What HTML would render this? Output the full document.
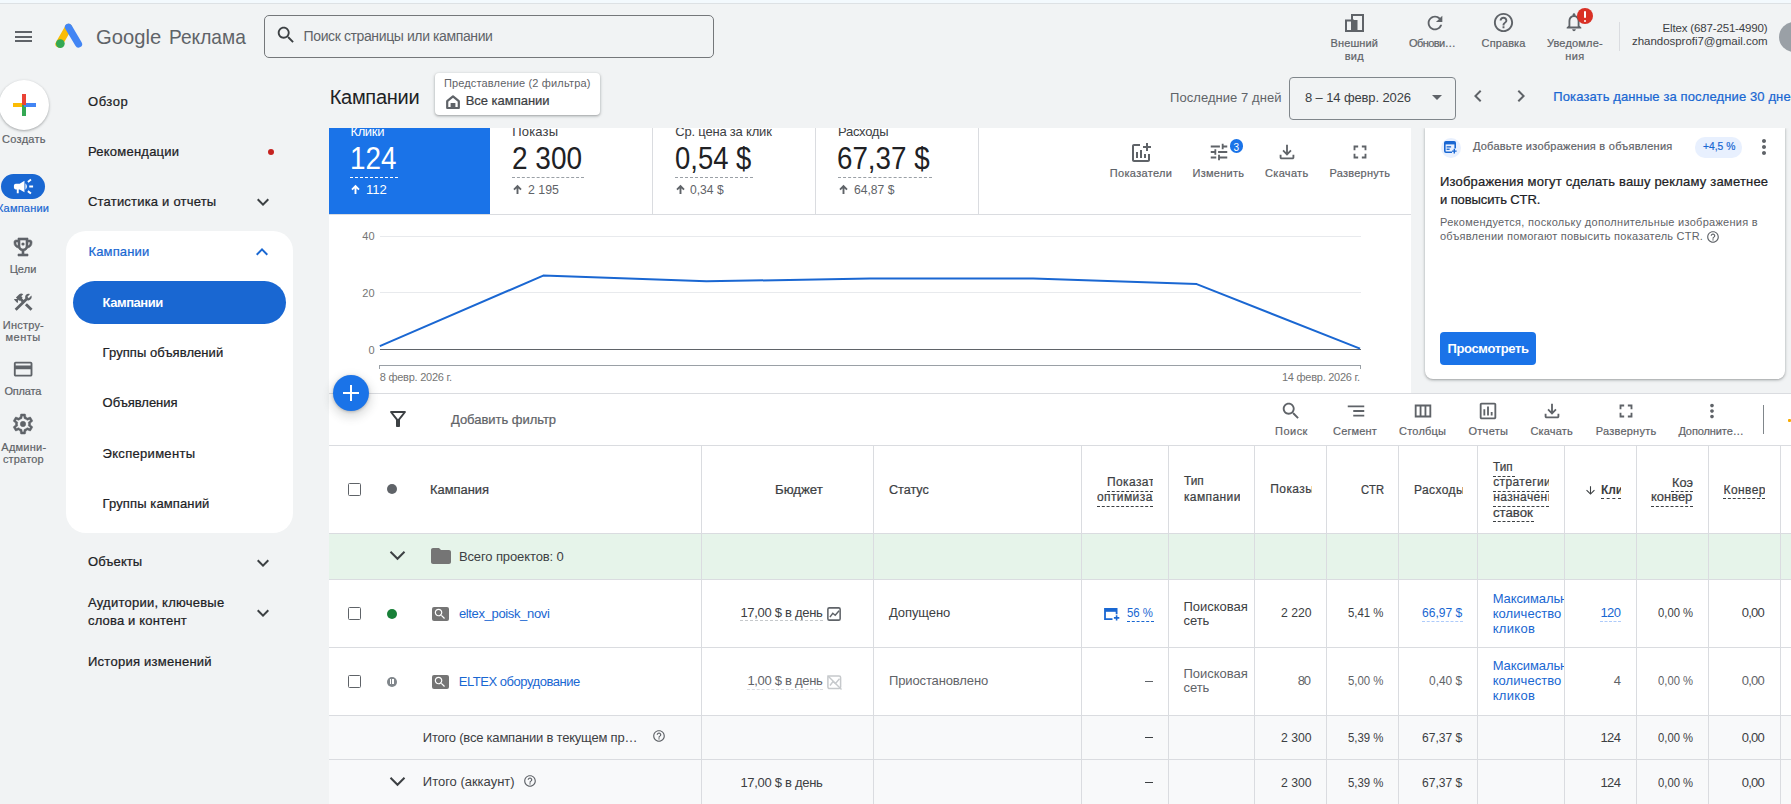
<!DOCTYPE html>
<html><head><meta charset="utf-8"><style>
html,body{margin:0;padding:0;}
body{width:1791px;height:804px;overflow:hidden;position:relative;background:#f1f3f4;font-family:"Liberation Sans",sans-serif;}
.a{position:absolute;}
.t{position:absolute;white-space:nowrap;line-height:1;}
svg{position:absolute;overflow:visible;}
</style></head><body>
<div class="a" style="left:0;top:0;width:1791px;height:3px;background:#f3f9fd"></div>
<div class="a" style="left:0;top:3px;width:1791px;height:1px;background:#dde1e4"></div>
<div class="a" style="left:15px;top:31px;width:17px;height:2px;background:#5f6368"></div>
<div class="a" style="left:15px;top:35.5px;width:17px;height:2px;background:#5f6368"></div>
<div class="a" style="left:15px;top:40px;width:17px;height:2px;background:#5f6368"></div>
<svg style="left:54px;top:22.2px;" width="30" height="27" viewBox="0 0 30 27"><path d="M5 22 L14.5 5.5" stroke="#fbbc04" stroke-width="7.2" stroke-linecap="round" fill="none"/><path d="M14.5 5.2 L24.5 22" stroke="#4285f4" stroke-width="7.2" stroke-linecap="round" fill="none"/><circle cx="6.3" cy="21.6" r="4.4" fill="#34a853"/></svg>
<div class="t" style="left:95.50px;top:25.72px;font-size:21px;color:#5f6368;transform:scaleX(0.9616);transform-origin:0 0;"><span id="t0">Google</span></div>
<div class="t" style="left:169.00px;top:25.72px;font-size:21px;color:#5f6368;transform:scaleX(0.9116);transform-origin:0 0;"><span id="t1">Реклама</span></div>
<div class="a" style="left:264px;top:15px;width:448px;height:41px;border:1px solid #74777a;border-radius:5px;"></div>
<svg style="left:275px;top:24px;" width="22" height="22" viewBox="0 0 24 24"><path fill="#3c4043" d="M15.5 14h-.79l-.28-.27C15.41 12.59 16 11.11 16 9.5 16 5.91 13.09 3 9.5 3S3 5.91 3 9.5 5.91 16 9.5 16c1.61 0 3.09-.59 4.23-1.57l.27.28v.79l5 4.99L20.49 19l-4.99-5zm-6 0C7.01 14 5 11.99 5 9.5S7.01 5 9.5 5 14 7.01 14 9.5 11.99 14 9.5 14z"/></svg>
<div class="t" style="left:303.60px;top:29.45px;font-size:14px;color:#5f6368;letter-spacing:-0.390px;"><span id="t2">Поиск страницы или кампании</span></div>
<svg style="left:1345px;top:14px;" width="19" height="18" viewBox="0 0 19 18"><rect x="7" y="1" width="11" height="16" fill="none" stroke="#5f6368" stroke-width="2"/><rect x="1" y="6.5" width="7" height="10.5" fill="none" stroke="#5f6368" stroke-width="2"/><rect x="6.5" y="6" width="6" height="12" fill="#5f6368"/></svg>
<div class="t" style="left:1330.55px;top:38.09px;font-size:11px;color:#5f6368;letter-spacing:0.100px;-webkit-text-stroke:0.20px #5f6368;"><span id="t3">Внешний</span></div>
<div class="t" style="left:1344.70px;top:50.99px;font-size:11px;color:#5f6368;letter-spacing:0.300px;-webkit-text-stroke:0.20px #5f6368;"><span id="t4">вид</span></div>
<svg style="left:1423.5px;top:12px;" width="22" height="22" viewBox="0 0 24 24"><path fill="#5f6368" d="M17.65 6.35C16.2 4.9 14.21 4 12 4c-4.42 0-7.99 3.58-7.99 8s3.57 8 7.99 8c3.73 0 6.84-2.55 7.73-6h-2.08c-.82 2.33-3.04 4-5.65 4-3.31 0-6-2.69-6-6s2.69-6 6-6c1.66 0 3.14.69 4.22 1.78L13 11h7V4l-2.35 2.35z"/></svg>
<div class="t" style="left:1409.00px;top:38.09px;font-size:11px;color:#5f6368;letter-spacing:-0.558px;-webkit-text-stroke:0.20px #5f6368;"><span id="t5">Обнови…</span></div>
<svg style="left:1491.95px;top:11.4px;" width="23" height="23" viewBox="0 0 24 24"><path fill="#5f6368" d="M11 18h2v-2h-2v2zm1-16C6.48 2 2 6.48 2 12s4.48 10 10 10 10-4.48 10-10S17.52 2 12 2zm0 18c-4.41 0-8-3.59-8-8s3.59-8 8-8 8 3.59 8 8-3.59 8-8 8zm0-14c-2.21 0-4 1.79-4 4h2c0-1.1.9-2 2-2s2 .9 2 2c0 2-3 1.75-3 5h2c0-2.25 3-2.5 3-5 0-2.21-1.79-4-4-4z"/></svg>
<div class="t" style="left:1481.60px;top:37.89px;font-size:11px;color:#5f6368;letter-spacing:0.100px;-webkit-text-stroke:0.20px #5f6368;"><span id="t6">Справка</span></div>
<svg style="left:1563.35px;top:11.2px;" width="22" height="22" viewBox="0 0 24 24"><path fill="#5f6368" d="M12 22c1.1 0 2-.9 2-2h-4c0 1.1.9 2 2 2zm6-6v-5c0-3.07-1.64-5.64-4.5-6.32V4c0-.83-.67-1.5-1.5-1.5s-1.5.67-1.5 1.5v.68C7.63 5.36 6 7.92 6 11v5l-2 2v1h16v-1l-2-2zm-2 1H8v-6c0-2.48 1.51-4.5 4-4.5s4 2.02 4 4.5v6z"/></svg>
<div class="a" style="left:1576.5px;top:8.2px;width:16px;height:16px;border-radius:50%;background:#d93025"></div>
<div class="a" style="left:1583.6px;top:11px;width:2px;height:7px;background:#fff;border-radius:1px"></div>
<div class="a" style="left:1583.6px;top:19.5px;width:2px;height:2px;background:#fff;border-radius:1px"></div>
<div class="t" style="left:1546.90px;top:37.89px;font-size:11px;color:#5f6368;letter-spacing:0.194px;-webkit-text-stroke:0.20px #5f6368;"><span id="t7">Уведомле-</span></div>
<div class="t" style="left:1565.30px;top:50.79px;font-size:11px;color:#5f6368;letter-spacing:0.400px;-webkit-text-stroke:0.20px #5f6368;"><span id="t8">ния</span></div>
<div class="a" style="left:1619px;top:22px;width:1px;height:29px;background:#dadce0"></div>
<div class="t" style="left:1662.50px;top:22.57px;font-size:11.5px;color:#3c4043;letter-spacing:-0.155px;"><span id="t9">Eltex (687-251-4990)</span></div>
<div class="t" style="left:1632.00px;top:36.47px;font-size:11.5px;color:#3c4043;letter-spacing:-0.034px;"><span id="t10">zhandosprofi7@gmail.com</span></div>
<div class="a" style="left:1779px;top:22px;width:30px;height:30px;border-radius:50%;background:#9aa0a6"></div>
<div class="a" style="left:-1px;top:80px;width:50px;height:50px;border-radius:50%;background:#fff;box-shadow:0 1px 3px rgba(60,64,67,.3),0 1px 2px rgba(60,64,67,.15)"></div>
<div class="a" style="left:13px;top:102.5px;width:11px;height:4px;background:#fbbc04"></div>
<div class="a" style="left:22px;top:105px;width:4px;height:10.5px;background:#34a853"></div>
<div class="a" style="left:24px;top:102.5px;width:11.5px;height:4px;background:#4285f4"></div>
<div class="a" style="left:22px;top:93.5px;width:4px;height:11.5px;background:#ea4335"></div>
<div class="t" style="left:2.10px;top:133.99px;font-size:11px;color:#5f6368;letter-spacing:0.267px;-webkit-text-stroke:0.20px #5f6368;"><span id="t11">Создать</span></div>
<div class="a" style="left:1px;top:174px;width:44px;height:25px;border-radius:13px;background:#1967d2"></div>
<svg style="left:12.1px;top:174.6px;" width="23" height="23" viewBox="0 0 24 24"><path fill="#fff" d="M18 11v2h4v-2h-4zm-2 6.61c.96.71 2.21 1.65 3.2 2.39.4-.53.8-1.07 1.2-1.6-.99-.74-2.24-1.68-3.2-2.4-.4.54-.8 1.08-1.2 1.61zM20.4 5.6c-.4-.53-.8-1.07-1.2-1.6-.99.74-2.24 1.68-3.2 2.4.4.53.8 1.07 1.2 1.6.96-.72 2.21-1.65 3.2-2.4zM4 9c-1.1 0-2 .9-2 2v2c0 1.1.9 2 2 2h1v4h2v-4h1l5 3V6L8 9H4zm11.5 3c0-1.33-.58-2.53-1.5-3.35v6.69c.92-.81 1.5-2.01 1.5-3.34z"/></svg>
<div class="t" style="left:-3.00px;top:202.69px;font-size:11px;color:#1967d2;letter-spacing:0.207px;-webkit-text-stroke:0.20px #1967d2;"><span id="t12">Кампании</span></div>
<svg style="left:11.3px;top:234.9px;" width="24" height="24" viewBox="0 0 24 24"><path fill="#5f6368" stroke="#5f6368" stroke-width="0.6" d="M19 5h-2V3H7v2H5c-1.1 0-2 .9-2 2v1c0 2.55 1.92 4.63 4.39 4.94.63 1.5 1.98 2.63 3.61 2.96V19H7v2h10v-2h-4v-3.1c1.63-.33 2.98-1.46 3.61-2.96C19.08 12.63 21 10.55 21 8V7c0-1.1-.9-2-2-2zM5 8V7h2v3.82C5.84 10.4 5 9.3 5 8zm7 6c-1.65 0-3-1.35-3-3V5h6v6c0 1.65-1.35 3-3 3zm7-6c0 1.3-.84 2.4-2 2.82V7h2v1z"/><circle cx="12" cy="9" r="1.6" fill="#5f6368"/></svg>
<div class="t" style="left:9.65px;top:264.39px;font-size:11px;color:#5f6368;letter-spacing:0.083px;-webkit-text-stroke:0.20px #5f6368;"><span id="t13">Цели</span></div>
<svg style="left:12.05px;top:291.15px;" width="22.5" height="22.5" viewBox="0 0 24 24"><path fill="#5f6368" d="M13.783 15.172l2.121-2.121 5.996 5.996-2.121 2.121zM17.5 10c1.93 0 3.5-1.57 3.5-3.5 0-.58-.16-1.12-.41-1.6l-2.7 2.7-1.49-1.49 2.7-2.7c-.48-.25-1.02-.41-1.6-.41C15.57 3 14 4.57 14 6.5c0 .41.08.8.21 1.16l-1.85 1.85-1.78-1.78.71-.71-1.41-1.41L12 3.49c-1.17-1.17-3.07-1.17-4.24 0L4.22 7.03l1.41 1.41H2.81l-.71.71 3.54 3.54.71-.71V9.15l1.41 1.41.71-.71 1.78 1.78-7.41 7.41 2.12 2.12L16.34 9.79c.36.13.75.21 1.16.21z"/></svg>
<div class="t" style="left:2.80px;top:319.79px;font-size:11px;color:#5f6368;letter-spacing:0.217px;-webkit-text-stroke:0.20px #5f6368;"><span id="t14">Инстру-</span></div>
<div class="t" style="left:5.55px;top:332.29px;font-size:11px;color:#5f6368;letter-spacing:0.450px;-webkit-text-stroke:0.20px #5f6368;"><span id="t15">менты</span></div>
<svg style="left:11.95px;top:357.85px;" width="22.3" height="22.3" viewBox="0 0 24 24"><path fill="#5f6368" d="M20 4H4c-1.11 0-1.99.89-1.99 2L2 18c0 1.11.89 2 2 2h16c1.11 0 2-.89 2-2V6c0-1.11-.89-2-2-2zm0 14H4v-6h16v6zm0-10H4V6h16v2z"/></svg>
<div class="t" style="left:4.50px;top:385.79px;font-size:11px;color:#5f6368;letter-spacing:-0.210px;-webkit-text-stroke:0.20px #5f6368;"><span id="t16">Оплата</span></div>
<svg style="left:11.1px;top:411.85px;" width="24" height="24" viewBox="0 0 24 24"><path fill="#5f6368" stroke="#5f6368" stroke-width="0.5" d="M19.43 12.98c.04-.32.07-.64.07-.98 0-.34-.03-.66-.07-.98l2.11-1.65c.19-.15.24-.42.12-.64l-2-3.46c-.09-.16-.26-.25-.44-.25-.06 0-.12.01-.17.03l-2.49 1c-.52-.4-1.08-.73-1.69-.98l-.38-2.65C14.46 2.18 14.25 2 14 2h-4c-.25 0-.46.18-.49.42l-.38 2.65c-.61.25-1.17.59-1.69.98l-2.49-1c-.06-.02-.12-.03-.18-.03-.17 0-.34.09-.43.25l-2 3.46c-.13.22-.07.49.12.64l2.11 1.65c-.04.32-.07.65-.07.98 0 .33.03.66.07.98l-2.11 1.65c-.19.15-.24.42-.12.64l2 3.46c.09.16.26.25.44.25.06 0 .12-.01.17-.03l2.49-1c.52.4 1.08.73 1.69.98l.38 2.65c.03.24.24.42.49.42h4c.25 0 .46-.18.49-.42l.38-2.65c.61-.25 1.17-.59 1.69-.98l2.49 1c.06.02.12.03.18.03.17 0 .34-.09.43-.25l2-3.46c.12-.22.07-.49-.12-.64l-2.11-1.65zm-1.98-1.71c.04.31.05.52.05.73 0 .21-.02.43-.05.73l-.14 1.13.89.7 1.08.84-.7 1.21-1.27-.51-1.04-.42-.9.68c-.43.32-.84.56-1.25.73l-1.06.43-.16 1.13-.2 1.35h-1.4l-.19-1.35-.16-1.13-1.06-.43c-.43-.18-.83-.41-1.23-.71l-.91-.7-1.06.43-1.27.51-.7-1.21 1.08-.84.89-.7-.14-1.13c-.03-.31-.05-.54-.05-.74s.02-.43.05-.73l.14-1.13-.89-.7-1.08-.84.7-1.21 1.27.51 1.04.42.9-.68c.43-.32.84-.56 1.25-.73l1.06-.43.16-1.13.2-1.35h1.39l.19 1.35.16 1.13 1.06.43c.43.18.83.41 1.23.71l.91.7 1.06-.43 1.27-.51.7 1.21-1.07.85-.89.7.14 1.13zM12 9.3a2.7 2.7 0 1 0 0 5.4a2.7 2.7 0 1 0 0-5.4z"/></svg>
<div class="t" style="left:1.30px;top:441.59px;font-size:11px;color:#5f6368;letter-spacing:0.242px;-webkit-text-stroke:0.20px #5f6368;"><span id="t17">Админи-</span></div>
<div class="t" style="left:2.90px;top:453.79px;font-size:11px;color:#5f6368;letter-spacing:0.183px;-webkit-text-stroke:0.20px #5f6368;"><span id="t18">стратор</span></div>
<div class="t" style="left:88.00px;top:94.50px;font-size:13px;color:#202124;letter-spacing:0.538px;-webkit-text-stroke:0.23px #202124;"><span id="t19">Обзор</span></div>
<div class="t" style="left:88.00px;top:145.20px;font-size:13px;color:#202124;letter-spacing:0.227px;-webkit-text-stroke:0.23px #202124;"><span id="t20">Рекомендации</span></div>
<div class="a" style="left:268.3px;top:148.6px;width:6px;height:6px;border-radius:50%;background:#c5221f"></div>
<div class="t" style="left:88.00px;top:195.00px;font-size:13px;color:#202124;letter-spacing:0.203px;-webkit-text-stroke:0.23px #202124;"><span id="t21">Статистика и отчеты</span></div>
<svg style="left:251px;top:190px;" width="24" height="24" viewBox="0 0 24 24"><path fill="#3c4043" d="M16.59 8.59L12 13.17 7.41 8.59 6 10l6 6 6-6z"/></svg>
<div class="a" style="left:66px;top:231px;width:227px;height:302px;border-radius:20px;background:#fff"></div>
<div class="t" style="left:88.40px;top:245.00px;font-size:13px;color:#1967d2;letter-spacing:0.171px;-webkit-text-stroke:0.23px #1967d2;"><span id="t22">Кампании</span></div>
<svg style="left:250px;top:240px;" width="24" height="24" viewBox="0 0 24 24"><path fill="#1967d2" d="M12 8l-6 6 1.41 1.41L12 10.83l4.59 4.58L18 14z"/></svg>
<div class="a" style="left:73px;top:281px;width:213px;height:42.5px;border-radius:22px;background:#1967d2"></div>
<div class="t" style="left:102.50px;top:295.80px;font-size:13px;color:#fff;letter-spacing:-0.436px;font-weight:700;"><span id="t23">Кампании</span></div>
<div class="t" style="left:102.60px;top:345.90px;font-size:13px;color:#202124;letter-spacing:0.072px;-webkit-text-stroke:0.23px #202124;"><span id="t24">Группы объявлений</span></div>
<div class="t" style="left:102.60px;top:396.30px;font-size:13px;color:#202124;letter-spacing:-0.033px;-webkit-text-stroke:0.23px #202124;"><span id="t25">Объявления</span></div>
<div class="t" style="left:102.60px;top:447.00px;font-size:13px;color:#202124;letter-spacing:0.300px;-webkit-text-stroke:0.23px #202124;"><span id="t26">Эксперименты</span></div>
<div class="t" style="left:102.60px;top:497.30px;font-size:13px;color:#202124;letter-spacing:0.118px;-webkit-text-stroke:0.23px #202124;"><span id="t27">Группы кампаний</span></div>
<div class="t" style="left:88.00px;top:555.10px;font-size:13px;color:#202124;letter-spacing:0.100px;-webkit-text-stroke:0.23px #202124;"><span id="t28">Объекты</span></div>
<svg style="left:251px;top:550.5px;" width="24" height="24" viewBox="0 0 24 24"><path fill="#3c4043" d="M16.59 8.59L12 13.17 7.41 8.59 6 10l6 6 6-6z"/></svg>
<div class="t" style="left:88.00px;top:596.00px;font-size:13px;color:#202124;letter-spacing:0.239px;-webkit-text-stroke:0.23px #202124;"><span id="t29">Аудитории, ключевые</span></div>
<div class="t" style="left:88.00px;top:614.00px;font-size:13px;color:#202124;letter-spacing:0.168px;-webkit-text-stroke:0.23px #202124;"><span id="t30">слова и контент</span></div>
<svg style="left:251px;top:600.5px;" width="24" height="24" viewBox="0 0 24 24"><path fill="#3c4043" d="M16.59 8.59L12 13.17 7.41 8.59 6 10l6 6 6-6z"/></svg>
<div class="t" style="left:88.00px;top:654.80px;font-size:13px;color:#202124;letter-spacing:0.256px;-webkit-text-stroke:0.23px #202124;"><span id="t31">История изменений</span></div>
<div class="t" style="left:329.70px;top:87.27px;font-size:20px;color:#202124;letter-spacing:-0.279px;"><span id="t32">Кампании</span></div>
<div class="a" style="left:435px;top:73px;width:165px;height:42px;border-radius:4px;background:#fff;box-shadow:0 1px 2px rgba(60,64,67,.3),0 1px 3px 1px rgba(60,64,67,.15)"></div>
<div class="t" style="left:443.90px;top:78.19px;font-size:11px;color:#5f6368;letter-spacing:0.160px;"><span id="t33">Представление (2 фильтра)</span></div>
<svg style="left:446px;top:94.5px;" width="14" height="14" viewBox="0 0 14 14"><path d="M1.2 13V6.2L7 1.4l5.8 4.8V13z" fill="none" stroke="#5f6368" stroke-width="2.2" stroke-linejoin="round"/><rect x="4.6" y="8" width="4.8" height="5" fill="#5f6368"/></svg>
<div class="t" style="left:465.70px;top:93.70px;font-size:13px;color:#3c4043;letter-spacing:-0.023px;-webkit-text-stroke:0.23px #3c4043;"><span id="t34">Все кампании</span></div>
<div class="t" style="left:1170.00px;top:90.80px;font-size:13px;color:#5f6368;letter-spacing:0.057px;"><span id="t35">Последние 7 дней</span></div>
<div class="a" style="left:1289px;top:77px;width:165px;height:41px;border:1px solid #80868b;border-radius:4px;"></div>
<div class="t" style="left:1305.00px;top:90.80px;font-size:13px;color:#3c4043;letter-spacing:-0.122px;"><span id="t36">8 – 14 февр. 2026</span></div>
<svg style="left:1425px;top:85px;" width="24" height="24" viewBox="0 0 24 24"><path fill="#5f6368" d="M7 10l5 5 5-5z"/></svg>
<svg style="left:1465.5px;top:84px;" width="24" height="24" viewBox="0 0 24 24"><path fill="#5f6368" d="M15.41 7.41L14 6l-6 6 6 6 1.41-1.41L10.83 12z"/></svg>
<svg style="left:1508.5px;top:84px;" width="24" height="24" viewBox="0 0 24 24"><path fill="#5f6368" d="M10 6L8.59 7.41 13.17 12l-4.58 4.59L10 18l6-6z"/></svg>
<div class="t" style="left:1553.30px;top:90.00px;font-size:13px;color:#1967d2;letter-spacing:0.120px;-webkit-text-stroke:0.23px #1967d2;"><span id="t37">Показать данные за последние 30 дней</span></div>
<div class="a" style="left:329px;top:127.5px;width:1082px;height:266px;background:#fff"></div>
<div class="a" style="left:329px;top:213.5px;width:1082px;height:1px;background:#dadce0"></div>
<div class="a" style="left:329px;top:127.5px;width:161px;height:86.5px;background:#1a73e8"></div>
<div class="a" style="left:652px;top:127.5px;width:1px;height:86px;background:#dadce0"></div>
<div class="a" style="left:815px;top:127.5px;width:1px;height:86px;background:#dadce0"></div>
<div class="a" style="left:978px;top:127.5px;width:1px;height:86px;background:#dadce0"></div>
<div class="t" style="left:350.40px;top:124.80px;font-size:13px;color:#fff;letter-spacing:-0.338px;"><span id="t38">Клики</span></div>
<div class="t" style="left:349.80px;top:142.86px;font-size:31px;color:#fff;transform:scaleX(0.8975);transform-origin:0 0;"><span id="t39">124</span></div>
<div class="a" style="left:350.4px;top:177px;width:47.9px;height:0;border-top:1px dashed #fff"></div>
<svg style="left:351.4px;top:185px;" width="9" height="9" viewBox="0 0 9 9"><path d="M4.5 9V1.2M1 4.6L4.5 1.1 8 4.6" fill="none" stroke="#fff" stroke-width="1.9"/></svg>
<div class="t" style="left:365.60px;top:183.64px;font-size:12px;color:#fff;transform:scaleX(1.0914);transform-origin:0 0;"><span id="t40">112</span></div>
<div class="t" style="left:512.30px;top:124.80px;font-size:13px;color:#3c4043;letter-spacing:0.150px;"><span id="t41">Показы</span></div>
<div class="t" style="left:511.70px;top:142.86px;font-size:31px;color:#202124;transform:scaleX(0.9034);transform-origin:0 0;"><span id="t42">2 300</span></div>
<div class="a" style="left:512.3px;top:177px;width:71.6px;height:0;border-top:1px dashed #9aa0a6"></div>
<svg style="left:513.3px;top:185px;" width="9" height="9" viewBox="0 0 9 9"><path d="M4.5 9V1.2M1 4.6L4.5 1.1 8 4.6" fill="none" stroke="#5f6368" stroke-width="1.9"/></svg>
<div class="t" style="left:527.50px;top:183.64px;font-size:12px;color:#5f6368;transform:scaleX(1.0283);transform-origin:0 0;"><span id="t43">2 195</span></div>
<div class="t" style="left:675.30px;top:124.80px;font-size:13px;color:#3c4043;letter-spacing:-0.203px;"><span id="t44">Ср. цена за клик</span></div>
<div class="t" style="left:674.70px;top:142.86px;font-size:31px;color:#202124;transform:scaleX(0.8852);transform-origin:0 0;"><span id="t45">0,54 $</span></div>
<div class="a" style="left:675.3px;top:177px;width:77.8px;height:0;border-top:1px dashed #9aa0a6"></div>
<svg style="left:676.3px;top:185px;" width="9" height="9" viewBox="0 0 9 9"><path d="M4.5 9V1.2M1 4.6L4.5 1.1 8 4.6" fill="none" stroke="#5f6368" stroke-width="1.9"/></svg>
<div class="t" style="left:690.40px;top:183.64px;font-size:12px;color:#5f6368;transform:scaleX(1.0075);transform-origin:0 0;"><span id="t46">0,34 $</span></div>
<div class="t" style="left:838.00px;top:124.80px;font-size:13px;color:#3c4043;letter-spacing:-0.283px;"><span id="t47">Расходы</span></div>
<div class="t" style="left:837.40px;top:142.86px;font-size:31px;color:#202124;transform:scaleX(0.8951);transform-origin:0 0;"><span id="t48">67,37 $</span></div>
<div class="a" style="left:838px;top:177px;width:94.1px;height:0;border-top:1px dashed #9aa0a6"></div>
<svg style="left:839px;top:185px;" width="9" height="9" viewBox="0 0 9 9"><path d="M4.5 9V1.2M1 4.6L4.5 1.1 8 4.6" fill="none" stroke="#5f6368" stroke-width="1.9"/></svg>
<div class="t" style="left:853.50px;top:183.64px;font-size:12px;color:#5f6368;transform:scaleX(1.0112);transform-origin:0 0;"><span id="t49">64,87 $</span></div>
<div class="a" style="left:329px;top:120px;width:1082px;height:7.5px;background:#f1f3f4"></div>
<svg style="left:1129px;top:141px;" width="24" height="24" viewBox="0 0 24 24"><path fill="#5f6368" d="M22 5v2h-3v3h-2V7h-3V5h3V2h2v3h3zm-3 14H5V5h6V3H5c-1.1 0-2 .9-2 2v14c0 1.1.9 2 2 2h14c1.1 0 2-.9 2-2v-6h-2v6zm-4-6v4h2v-4h-2zm-4 4h2V9h-2v8zm-2 0v-6H7v6h2z"/></svg>
<div class="t" style="left:1109.80px;top:167.79px;font-size:11px;color:#5f6368;letter-spacing:0.333px;-webkit-text-stroke:0.20px #5f6368;"><span id="t50">Показатели</span></div>
<svg style="left:1207.65px;top:141.1px;" width="22" height="22" viewBox="0 0 24 24"><path fill="#5f6368" d="M3 17v2h6v-2H3zM3 5v2h10V5H3zm10 16v-2h8v-2h-8v-2h-2v6h2zM7 9v2H3v2h4v2h2V9H7zm14 4v-2H11v2h10zm-6-4h2V7h4V5h-4V3h-2v6z"/></svg>
<div class="a" style="left:1229.6px;top:139.4px;width:13.4px;height:13.4px;border-radius:50%;background:#1a73e8"></div>
<div class="t" style="left:1233.52px;top:142.53px;font-size:10px;color:#fff;"><span id="t51">3</span></div>
<div class="t" style="left:1192.50px;top:167.79px;font-size:11px;color:#5f6368;letter-spacing:0.257px;-webkit-text-stroke:0.20px #5f6368;"><span id="t52">Изменить</span></div>
<svg style="left:1275.95px;top:140.95px;" width="22" height="22" viewBox="0 0 24 24"><path fill="#5f6368" d="M18 15v3H6v-3H4v3c0 1.1.9 2 2 2h12c1.1 0 2-.9 2-2v-3h-2zm-1-4l-1.41-1.41L13 12.17V4h-2v8.17L8.41 9.59 7 11l5 5 5-5z"/></svg>
<div class="t" style="left:1265.00px;top:167.79px;font-size:11px;color:#5f6368;letter-spacing:0.325px;-webkit-text-stroke:0.20px #5f6368;"><span id="t53">Скачать</span></div>
<svg style="left:1349.05px;top:141.1px;" width="22" height="22" viewBox="0 0 24 24"><path fill="#5f6368" d="M7 14H5v5h5v-2H7v-3zm-2-4h2V7h3V5H5v5zm12 7h-3v2h5v-5h-2v3zM14 5v2h3v3h2V5h-5z"/></svg>
<div class="t" style="left:1329.50px;top:167.79px;font-size:11px;color:#5f6368;letter-spacing:0.244px;-webkit-text-stroke:0.20px #5f6368;"><span id="t54">Развернуть</span></div>
<div class="a" style="left:379.5px;top:235.5px;width:981px;height:1px;background:#e8eaed"></div>
<div class="t" style="left:362.20px;top:231.29px;font-size:11px;color:#757575;letter-spacing:0.250px;"><span id="t55">40</span></div>
<div class="a" style="left:379.5px;top:292.1px;width:981px;height:1px;background:#e8eaed"></div>
<div class="t" style="left:362.20px;top:287.89px;font-size:11px;color:#757575;letter-spacing:0.250px;"><span id="t56">20</span></div>
<div class="a" style="left:379.5px;top:349px;width:981px;height:1px;background:#5f6368"></div>
<div class="t" style="left:368.60px;top:344.59px;font-size:11px;color:#757575;"><span id="t57">0</span></div>
<div class="a" style="left:379.5px;top:365px;width:981px;height:1px;background:#9aa0a6"></div>
<div class="a" style="left:379px;top:365px;width:1px;height:4px;background:#9aa0a6"></div>
<div class="a" style="left:1360px;top:365px;width:1px;height:4px;background:#9aa0a6"></div>
<div class="t" style="left:379.70px;top:371.99px;font-size:11px;color:#757575;letter-spacing:-0.239px;"><span id="t58">8 февр. 2026 г.</span></div>
<div class="t" style="left:1282.00px;top:371.99px;font-size:11px;color:#757575;letter-spacing:-0.253px;"><span id="t59">14 февр. 2026 г.</span></div>
<svg style="left:0px;top:0px;pointer-events:none;" width="1791" height="804" viewBox="0 0 1791 804"><path d="M379.8 346.2 L543.2 275.6 L706.5 281.3 L869.9 278.6 L1033.3 278.5 L1196.7 284.1 L1360.0 348.6" stroke="#1a67d2" stroke-width="2" fill="none" stroke-linejoin="round"/></svg>
<div class="a" style="left:1425px;top:127.5px;width:360px;height:251.5px;background:#fff;border-radius:0 0 8px 8px;box-shadow:0 1px 2px rgba(60,64,67,.3),0 1px 3px 1px rgba(60,64,67,.15)"></div>
<div class="a" style="left:1420px;top:120px;width:371px;height:7.5px;background:#f1f3f4"></div>
<div class="a" style="left:1440.6px;top:137.5px;width:20px;height:20px;border-radius:50%;background:#e8f0fe"></div>
<svg style="left:1444px;top:141px;" width="13" height="13" viewBox="0 0 13 13"><rect x="0.8" y="0.8" width="10.4" height="10.4" rx="1.2" fill="none" stroke="#1967d2" stroke-width="1.6"/><rect x="0.8" y="0.8" width="10.4" height="2.6" fill="#1967d2"/><rect x="2.6" y="5.2" width="4.5" height="1.3" fill="#1967d2"/><rect x="2.6" y="7.6" width="3" height="1.3" fill="#1967d2"/><rect x="8" y="7.4" width="5" height="5" fill="#e8f0fe"/><path d="M10.3 7.8v4.6M8 10.1h4.6" stroke="#1967d2" stroke-width="1.4"/></svg>
<div class="t" style="left:1472.90px;top:141.19px;font-size:11px;color:#5f6368;letter-spacing:0.256px;-webkit-text-stroke:0.20px #5f6368;"><span id="t60">Добавьте изображения в объявления</span></div>
<div class="a" style="left:1695px;top:137.4px;width:46.7px;height:20.2px;border-radius:10px;background:#e8f0fe"></div>
<div class="t" style="left:1702.60px;top:141.19px;font-size:11px;color:#1967d2;transform:scaleX(0.9349);transform-origin:0 0;-webkit-text-stroke:0.20px #1967d2;"><span id="t61">+4,5 %</span></div>
<svg style="left:1752px;top:135.3px;" width="24" height="24" viewBox="0 0 24 24"><path fill="#5f6368" d="M12 8c1.1 0 2-.9 2-2s-.9-2-2-2-2 .9-2 2 .9 2 2 2zm0 2c-1.1 0-2 .9-2 2s.9 2 2 2 2-.9 2-2-.9-2-2-2zm0 6c-1.1 0-2 .9-2 2s.9 2 2 2 2-.9 2-2-.9-2-2-2z"/></svg>
<div class="t" style="left:1440.00px;top:175.00px;font-size:13px;color:#202124;letter-spacing:0.189px;-webkit-text-stroke:0.23px #202124;"><span id="t62">Изображения могут сделать вашу рекламу заметнее</span></div>
<div class="t" style="left:1440.00px;top:192.70px;font-size:13px;color:#202124;letter-spacing:-0.107px;-webkit-text-stroke:0.23px #202124;"><span id="t63">и повысить CTR.</span></div>
<div class="t" style="left:1440.00px;top:217.19px;font-size:11px;color:#5f6368;letter-spacing:0.281px;"><span id="t64">Рекомендуется, поскольку дополнительные изображения в</span></div>
<div class="t" style="left:1440.00px;top:230.89px;font-size:11px;color:#5f6368;letter-spacing:0.229px;"><span id="t65">объявлении помогают повысить показатель CTR.</span></div>
<svg style="left:1706px;top:229.6px;" width="14" height="14" viewBox="0 0 24 24"><path fill="#5f6368" d="M11 18h2v-2h-2v2zm1-16C6.48 2 2 6.48 2 12s4.48 10 10 10 10-4.48 10-10S17.52 2 12 2zm0 18c-4.41 0-8-3.59-8-8s3.59-8 8-8 8 3.59 8 8-3.59 8-8 8zm0-14c-2.21 0-4 1.79-4 4h2c0-1.1.9-2 2-2s2 .9 2 2c0 2-3 1.75-3 5h2c0-2.25 3-2.5 3-5 0-2.21-1.79-4-4-4z"/></svg>
<div class="a" style="left:1440px;top:332px;width:95.7px;height:32.6px;border-radius:4px;background:#1a73e8"></div>
<div class="t" style="left:1447.50px;top:342.00px;font-size:13px;color:#fff;letter-spacing:-0.355px;font-weight:700;"><span id="t66">Просмотреть</span></div>
<div class="a" style="left:329px;top:393px;width:1462px;height:411px;background:#fff"></div>
<div class="a" style="left:329px;top:393px;width:1462px;height:1px;background:#dadce0"></div>
<div class="a" style="left:333px;top:375px;width:36px;height:36px;border-radius:50%;background:#1a73e8;box-shadow:0 1px 3px rgba(60,64,67,.3),0 4px 8px 3px rgba(60,64,67,.15)"></div>
<div class="a" style="left:343.2px;top:391.6px;width:15.6px;height:2.8px;background:#fff"></div>
<div class="a" style="left:349.6px;top:385.2px;width:2.8px;height:15.6px;background:#fff"></div>
<svg style="left:385.5px;top:407px;" width="24" height="24" viewBox="0 0 24 24"><path fill="#3c4043" d="M7 6h10l-5.01 6.3L7 6zm-2.75-.39C6.27 8.2 10 13 10 13v6c0 .55.45 1 1 1h2c.55 0 1-.45 1-1v-6s3.72-4.8 5.74-7.39c.51-.66.04-1.61-.79-1.61H5.04c-.83 0-1.3.95-.79 1.61z"/></svg>
<div class="t" style="left:451.00px;top:412.70px;font-size:13px;color:#5f6368;letter-spacing:-0.032px;-webkit-text-stroke:0.23px #5f6368;"><span id="t67">Добавить фильтр</span></div>
<svg style="left:1280.2px;top:400.09999999999997px;" width="22" height="22" viewBox="0 0 24 24"><path fill="#5f6368" d="M15.5 14h-.79l-.28-.27C15.41 12.59 16 11.11 16 9.5 16 5.91 13.09 3 9.5 3S3 5.91 3 9.5 5.91 16 9.5 16c1.61 0 3.09-.59 4.23-1.57l.27.28v.79l5 4.99L20.49 19l-4.99-5zm-6 0C7.01 14 5 11.99 5 9.5S7.01 5 9.5 5 14 7.01 14 9.5 11.99 14 9.5 14z"/></svg>
<div class="t" style="left:1275.00px;top:425.89px;font-size:11px;color:#5f6368;letter-spacing:0.487px;-webkit-text-stroke:0.20px #5f6368;"><span id="t68">Поиск</span></div>
<svg style="left:1344.5px;top:400.2px;" width="22" height="22" viewBox="0 0 24 24"><path fill="#5f6368" d="M9 18h12v-2H9v2zM3 6v2h18V6H3zm6 7h12v-2H9v2z"/></svg>
<div class="t" style="left:1333.10px;top:425.89px;font-size:11px;color:#5f6368;letter-spacing:0.125px;-webkit-text-stroke:0.20px #5f6368;"><span id="t69">Сегмент</span></div>
<svg style="left:1411.8px;top:399.9px;" width="22" height="22" viewBox="0 0 24 24"><path fill="#5f6368" d="M3 5v14h18V5H3zm5.33 12H5V7h3.33v10zm5.34 0h-3.33V7h3.33v10zM19 17h-3.33V7H19v10z"/></svg>
<div class="t" style="left:1399.00px;top:425.89px;font-size:11px;color:#5f6368;letter-spacing:0.225px;-webkit-text-stroke:0.20px #5f6368;"><span id="t70">Столбцы</span></div>
<svg style="left:1477.2px;top:400px;" width="22" height="22" viewBox="0 0 24 24"><path fill="#5f6368" d="M19 3H5c-1.1 0-2 .9-2 2v14c0 1.1.9 2 2 2h14c1.1 0 2-.9 2-2V5c0-1.1-.9-2-2-2zm0 16H5V5h14v14zM7 10h2v7H7zm4-3h2v10h-2zm4 6h2v4h-2z"/></svg>
<div class="t" style="left:1468.40px;top:425.89px;font-size:11px;color:#5f6368;letter-spacing:0.320px;-webkit-text-stroke:0.20px #5f6368;"><span id="t71">Отчеты</span></div>
<svg style="left:1540.6px;top:400.2px;" width="22" height="22" viewBox="0 0 24 24"><path fill="#5f6368" d="M18 15v3H6v-3H4v3c0 1.1.9 2 2 2h12c1.1 0 2-.9 2-2v-3h-2zm-1-4l-1.41-1.41L13 12.17V4h-2v8.17L8.41 9.59 7 11l5 5 5-5z"/></svg>
<div class="t" style="left:1530.40px;top:425.89px;font-size:11px;color:#5f6368;letter-spacing:0.192px;-webkit-text-stroke:0.20px #5f6368;"><span id="t72">Скачать</span></div>
<svg style="left:1614.9px;top:400px;" width="22" height="22" viewBox="0 0 24 24"><path fill="#5f6368" d="M7 14H5v5h5v-2H7v-3zm-2-4h2V7h3V5H5v5zm12 7h-3v2h5v-5h-2v3zM14 5v2h3v3h2V5h-5z"/></svg>
<div class="t" style="left:1595.70px;top:425.89px;font-size:11px;color:#5f6368;letter-spacing:0.244px;-webkit-text-stroke:0.20px #5f6368;"><span id="t73">Развернуть</span></div>
<svg style="left:1700.8px;top:400px;" width="22" height="22" viewBox="0 0 24 24"><path fill="#5f6368" d="M12 8c1.1 0 2-.9 2-2s-.9-2-2-2-2 .9-2 2 .9 2 2 2zm0 2c-1.1 0-2 .9-2 2s.9 2 2 2 2-.9 2-2-.9-2-2-2zm0 6c-1.1 0-2 .9-2 2s.9 2 2 2 2-.9 2-2-.9-2-2-2z"/></svg>
<div class="t" style="left:1678.40px;top:425.89px;font-size:11px;color:#5f6368;letter-spacing:-0.100px;-webkit-text-stroke:0.20px #5f6368;"><span id="t74">Дополните…</span></div>
<div class="a" style="left:1763px;top:405px;width:1.2px;height:29px;background:#80868b"></div>
<div class="a" style="left:1788px;top:419px;width:3px;height:3px;background:#f9ab00;border-radius:1px"></div>
<div class="a" style="left:329px;top:445px;width:1462px;height:1px;background:#dadce0"></div>
<div class="a" style="left:329px;top:533px;width:1462px;height:46.5px;background:#e6f4ea"></div>
<div class="a" style="left:329px;top:715.5px;width:1462px;height:89px;background:#f8f9fa"></div>
<div class="a" style="left:329px;top:533px;width:1462px;height:1px;background:#dadce0"></div>
<div class="a" style="left:329px;top:579px;width:1462px;height:1px;background:#dadce0"></div>
<div class="a" style="left:329px;top:647px;width:1462px;height:1px;background:#dadce0"></div>
<div class="a" style="left:329px;top:715px;width:1462px;height:1px;background:#dadce0"></div>
<div class="a" style="left:329px;top:759px;width:1462px;height:1px;background:#dadce0"></div>
<div class="a" style="left:701px;top:446px;width:1px;height:358px;background:#dadce0"></div>
<div class="a" style="left:873px;top:446px;width:1px;height:358px;background:#dadce0"></div>
<div class="a" style="left:1081px;top:446px;width:1px;height:358px;background:#dadce0"></div>
<div class="a" style="left:1168px;top:446px;width:1px;height:358px;background:#dadce0"></div>
<div class="a" style="left:1254px;top:446px;width:1px;height:358px;background:#dadce0"></div>
<div class="a" style="left:1326px;top:446px;width:1px;height:358px;background:#dadce0"></div>
<div class="a" style="left:1398px;top:446px;width:1px;height:358px;background:#dadce0"></div>
<div class="a" style="left:1477px;top:446px;width:1px;height:358px;background:#dadce0"></div>
<div class="a" style="left:1564px;top:446px;width:1px;height:358px;background:#dadce0"></div>
<div class="a" style="left:1636px;top:446px;width:1px;height:358px;background:#dadce0"></div>
<div class="a" style="left:1708px;top:446px;width:1px;height:358px;background:#dadce0"></div>
<div class="a" style="left:1780px;top:446px;width:1px;height:358px;background:#dadce0"></div>
<div class="a" style="left:348.3px;top:483.3px;width:10.5px;height:10.5px;border:1.2px solid #5f6368;border-radius:1.5px;"></div>
<div class="a" style="left:386.8px;top:484.4px;width:10px;height:10px;border-radius:50%;background:#5f6368"></div>
<div class="t" style="left:430.40px;top:483.54px;font-size:12px;color:#3c4043;transform:scaleX(1.0747);transform-origin:0 0;-webkit-text-stroke:0.22px #3c4043;"><span id="t75">Кампания</span></div>
<div class="t" style="left:774.90px;top:483.94px;font-size:12px;color:#3c4043;transform:scaleX(1.1014);transform-origin:0 0;-webkit-text-stroke:0.22px #3c4043;"><span id="t76">Бюджет</span></div>
<div class="t" style="left:889.20px;top:483.84px;font-size:12px;color:#3c4043;transform:scaleX(1.0487);transform-origin:0 0;-webkit-text-stroke:0.22px #3c4043;"><span id="t77">Статус</span></div>
<div class="t" style="left:1107.00px;top:476.44px;font-size:12px;color:#3c4043;letter-spacing:0.400px;-webkit-text-stroke:0.22px #3c4043;width:46.30px;overflow:hidden;height:16.8px;"><span id="t78">Показатель</span></div>
<div class="t" style="left:1097.00px;top:491.34px;font-size:12px;color:#3c4043;letter-spacing:0.400px;-webkit-text-stroke:0.22px #3c4043;width:56.30px;overflow:hidden;height:16.8px;"><span id="t79">оптимизации</span></div>
<div class="a" style="left:1107px;top:491px;width:46px;border-top:1px dashed #3c4043"></div>
<div class="a" style="left:1097px;top:506px;width:56px;border-top:1px dashed #3c4043"></div>
<div class="t" style="left:1183.90px;top:475.44px;font-size:12px;color:#3c4043;transform:scaleX(0.9850);transform-origin:0 0;-webkit-text-stroke:0.22px #3c4043;"><span id="t80">Тип</span></div>
<div class="t" style="left:1183.90px;top:490.64px;font-size:12px;color:#3c4043;letter-spacing:0.400px;-webkit-text-stroke:0.22px #3c4043;width:55.90px;overflow:hidden;height:16.8px;"><span id="t81">кампании</span></div>
<div class="t" style="left:1270.30px;top:483.34px;font-size:12px;color:#3c4043;letter-spacing:0.400px;-webkit-text-stroke:0.22px #3c4043;width:41.90px;overflow:hidden;height:16.8px;"><span id="t82">Показы</span></div>
<div class="t" style="left:1360.60px;top:483.84px;font-size:12px;color:#3c4043;transform:scaleX(0.9331);transform-origin:0 0;-webkit-text-stroke:0.22px #3c4043;"><span id="t83">CTR</span></div>
<div class="t" style="left:1414.00px;top:483.84px;font-size:12px;color:#3c4043;letter-spacing:0.400px;-webkit-text-stroke:0.22px #3c4043;width:48.60px;overflow:hidden;height:16.8px;"><span id="t84">Расходы</span></div>
<div class="t" style="left:1493.20px;top:461.44px;font-size:12px;color:#3c4043;transform:scaleX(0.9750);transform-origin:0 0;-webkit-text-stroke:0.22px #3c4043;"><span id="t85">Тип</span></div>
<div class="a" style="left:1493px;top:475.8px;width:21.5px;border-top:1px dashed #3c4043"></div>
<div class="t" style="left:1493.20px;top:476.44px;font-size:12px;color:#3c4043;letter-spacing:0.400px;-webkit-text-stroke:0.22px #3c4043;width:55.80px;overflow:hidden;height:16.8px;"><span id="t86">стратегии</span></div>
<div class="a" style="left:1493px;top:490.8px;width:56px;border-top:1px dashed #3c4043"></div>
<div class="t" style="left:1493.20px;top:491.44px;font-size:12px;color:#3c4043;letter-spacing:0.400px;-webkit-text-stroke:0.22px #3c4043;width:55.80px;overflow:hidden;height:16.8px;"><span id="t87">назначения</span></div>
<div class="a" style="left:1493px;top:505.8px;width:56px;border-top:1px dashed #3c4043"></div>
<div class="t" style="left:1493.20px;top:506.54px;font-size:12px;color:#3c4043;transform:scaleX(1.1019);transform-origin:0 0;-webkit-text-stroke:0.22px #3c4043;"><span id="t88">ставок</span></div>
<div class="a" style="left:1493px;top:520.9000000000001px;width:40.5px;border-top:1px dashed #3c4043"></div>
<svg style="left:1583.5px;top:483.5px;" width="13" height="13" viewBox="0 0 24 24"><path fill="#3c4043" d="M20 12l-1.41-1.41L13 16.17V4h-2v12.17l-5.58-5.59L4 12l8 8 8-8z"/></svg>
<div class="t" style="left:1601.00px;top:484.34px;font-size:12px;color:#3c4043;letter-spacing:-0.100px;font-weight:700;width:20.00px;overflow:hidden;height:16.8px;"><span id="t89">Клики</span></div>
<div class="a" style="left:1601px;top:498px;width:20px;border-top:1px dashed #3c4043"></div>
<div class="t" style="left:1671.60px;top:476.64px;font-size:12px;color:#3c4043;transform:scaleX(1.0606);transform-origin:0 0;-webkit-text-stroke:0.22px #3c4043;"><span id="t90">Коэ</span></div>
<div class="t" style="left:1651.30px;top:491.44px;font-size:12px;color:#3c4043;transform:scaleX(1.0783);transform-origin:0 0;-webkit-text-stroke:0.22px #3c4043;"><span id="t91">конвер</span></div>
<div class="a" style="left:1671px;top:491px;width:22px;border-top:1px dashed #3c4043"></div>
<div class="a" style="left:1651px;top:506px;width:42px;border-top:1px dashed #3c4043"></div>
<div class="t" style="left:1723.50px;top:484.34px;font-size:12px;color:#3c4043;letter-spacing:0.400px;-webkit-text-stroke:0.22px #3c4043;width:41.70px;overflow:hidden;height:16.8px;"><span id="t92">Конверсии</span></div>
<div class="a" style="left:1723px;top:498px;width:42px;border-top:1px dashed #3c4043"></div>
<svg style="left:389px;top:550px;" width="17" height="11" viewBox="0 0 17 11"><path d="M1.5 1.8L8.5 8.8 15.5 1.8" fill="none" stroke="#3c4043" stroke-width="2"/></svg>
<svg style="left:428.5px;top:544px;" width="24" height="24" viewBox="0 0 24 24"><path fill="#757575" d="M10 4H4c-1.1 0-1.99.9-1.99 2L2 18c0 1.1.9 2 2 2h16c1.1 0 2-.9 2-2V8c0-1.1-.9-2-2-2h-8l-2-2z"/></svg>
<div class="t" style="left:458.90px;top:550.10px;font-size:13px;color:#3c4043;letter-spacing:-0.109px;"><span id="t93">Всего проектов: 0</span></div>
<div class="a" style="left:348px;top:607.4px;width:10.5px;height:10.5px;border:1.2px solid #5f6368;border-radius:1.5px;"></div>
<div class="a" style="left:387px;top:608.6px;width:10px;height:10px;border-radius:50%;background:#188038"></div>
<div class="a" style="left:431.6px;top:606.6px;width:17.4px;height:14.5px;border-radius:2px;background:#757575"></div>
<svg style="left:433.20000000000005px;top:607.2px;" width="14" height="14" viewBox="0 0 24 24"><path fill="#fff" d="M15.5 14h-.79l-.28-.27C15.41 12.59 16 11.11 16 9.5 16 5.91 13.09 3 9.5 3S3 5.91 3 9.5 5.91 16 9.5 16c1.61 0 3.09-.59 4.23-1.57l.27.28v.79l5 4.99L20.49 19l-4.99-5zm-6 0C7.01 14 5 11.99 5 9.5S7.01 5 9.5 5 14 7.01 14 9.5 11.99 14 9.5 14z"/></svg>
<div class="t" style="left:458.90px;top:606.50px;font-size:13px;color:#1967d2;letter-spacing:-0.347px;"><span id="t94">eltex_poisk_novi</span></div>
<div class="t" style="left:740.40px;top:606.40px;font-size:13px;color:#3c4043;letter-spacing:-0.296px;"><span id="t95">17,00 $ в день</span></div>
<div class="a" style="left:740px;top:620px;width:83px;border-top:1px dashed #c6c9cc"></div>
<svg style="left:826.8px;top:607px;" width="14.5" height="14.5" viewBox="0 0 15 15"><rect x="0.9" y="0.9" width="12.7" height="12.7" rx="1.5" fill="none" stroke="#5f6368" stroke-width="1.6"/><path d="M3 10.5 L6 6.5 L8.5 8.5 L12.5 3.8" fill="none" stroke="#5f6368" stroke-width="1.5"/></svg>
<div class="t" style="left:889.00px;top:606.40px;font-size:13px;color:#3c4043;letter-spacing:-0.100px;"><span id="t96">Допущено</span></div>
<svg style="left:1103.5px;top:607.8px;" width="16" height="12.5" viewBox="0 0 16 12.5"><path d="M8.5 11.2H1V1h11.6v5.2" fill="none" stroke="#1967d2" stroke-width="1.8"/><rect x="1" y="1" width="11.6" height="2.8" fill="#1967d2"/><path d="M12.6 7.2v5.3M9.9 9.85h5.4" stroke="#1967d2" stroke-width="1.6"/></svg>
<div class="t" style="left:1127.20px;top:606.10px;font-size:13px;color:#1967d2;transform:scaleX(0.8769);transform-origin:0 0;"><span id="t97">56 %</span></div>
<div class="a" style="left:1127px;top:620.5px;width:26.5px;border-top:1px dashed #1967d2"></div>
<div class="t" style="left:1183.50px;top:600.10px;font-size:13px;color:#3c4043;letter-spacing:-0.031px;"><span id="t98">Поисковая</span></div>
<div class="t" style="left:1183.50px;top:614.30px;font-size:13px;color:#3c4043;letter-spacing:-0.083px;"><span id="t99">сеть</span></div>
<div class="t" style="left:1280.50px;top:606.10px;font-size:13px;color:#3c4043;transform:scaleX(0.9401);transform-origin:0 0;"><span id="t100">2 220</span></div>
<div class="t" style="left:1347.90px;top:606.40px;font-size:13px;color:#3c4043;transform:scaleX(0.8776);transform-origin:0 0;"><span id="t101">5,41 %</span></div>
<div class="t" style="left:1422.20px;top:606.40px;font-size:13px;color:#1967d2;transform:scaleX(0.9296);transform-origin:0 0;"><span id="t102">66,97 $</span></div>
<div class="a" style="left:1422px;top:620.5px;width:41px;border-top:1px dashed #aecbfa"></div>
<div class="t" style="left:1492.70px;top:591.90px;font-size:13px;color:#1967d2;letter-spacing:-0.100px;width:71.30px;overflow:hidden;height:18.2px;"><span id="t103">Максимальное</span></div>
<div class="t" style="left:1492.70px;top:606.50px;font-size:13px;color:#1967d2;letter-spacing:0.061px;"><span id="t104">количество</span></div>
<div class="t" style="left:1492.70px;top:621.50px;font-size:13px;color:#1967d2;letter-spacing:0.330px;"><span id="t105">кликов</span></div>
<div class="t" style="left:1600.60px;top:606.40px;font-size:13px;color:#1967d2;letter-spacing:-0.700px;"><span id="t106">120</span></div>
<div class="a" style="left:1600px;top:620.5px;width:21px;border-top:1px dashed #aecbfa"></div>
<div class="t" style="left:1657.80px;top:606.40px;font-size:13px;color:#3c4043;transform:scaleX(0.8653);transform-origin:0 0;"><span id="t107">0,00 %</span></div>
<div class="t" style="left:1741.80px;top:606.40px;font-size:13px;color:#3c4043;letter-spacing:-0.767px;"><span id="t108">0,00</span></div>
<div class="a" style="left:348px;top:675.2px;width:10.5px;height:10.5px;border:1.2px solid #5f6368;border-radius:1.5px;"></div>
<div class="a" style="left:386.8px;top:676.8px;width:10px;height:10px;border-radius:50%;background:#80868b"></div>
<div class="a" style="left:390px;top:679.3px;width:1.3px;height:5px;background:#fff"></div>
<div class="a" style="left:392.4px;top:679.3px;width:1.3px;height:5px;background:#fff"></div>
<div class="a" style="left:431.6px;top:674.6px;width:17.4px;height:14.5px;border-radius:2px;background:#757575"></div>
<svg style="left:433.20000000000005px;top:675.2px;" width="14" height="14" viewBox="0 0 24 24"><path fill="#fff" d="M15.5 14h-.79l-.28-.27C15.41 12.59 16 11.11 16 9.5 16 5.91 13.09 3 9.5 3S3 5.91 3 9.5 5.91 16 9.5 16c1.61 0 3.09-.59 4.23-1.57l.27.28v.79l5 4.99L20.49 19l-4.99-5zm-6 0C7.01 14 5 11.99 5 9.5S7.01 5 9.5 5 14 7.01 14 9.5 11.99 14 9.5 14z"/></svg>
<div class="t" style="left:458.70px;top:674.90px;font-size:13px;color:#1967d2;letter-spacing:-0.456px;"><span id="t109">ELTEX оборудование</span></div>
<div class="t" style="left:747.40px;top:674.30px;font-size:13px;color:#5f6368;letter-spacing:-0.304px;"><span id="t110">1,00 $ в день</span></div>
<div class="a" style="left:747px;top:688.5px;width:76px;border-top:1px dashed #dadce0"></div>
<svg style="left:826.8px;top:675px;" width="15" height="15" viewBox="0 0 15 15"><rect x="0.9" y="0.9" width="12.7" height="12.7" rx="1.5" fill="none" stroke="#c6c9cc" stroke-width="1.5"/><path d="M3 10.5 L6 6.5 L8.5 8.5 L12.5 3.8" fill="none" stroke="#c6c9cc" stroke-width="1.4"/><path d="M0.5 0.5 L14.5 14.5" stroke="#c6c9cc" stroke-width="1.4"/></svg>
<div class="t" style="left:889.00px;top:674.30px;font-size:13px;color:#5f6368;letter-spacing:-0.127px;"><span id="t111">Приостановлено</span></div>
<div class="a" style="left:1144.7px;top:680.8px;width:8.5px;height:1.2px;background:#5f6368"></div>
<div class="t" style="left:1183.50px;top:666.50px;font-size:13px;color:#5f6368;letter-spacing:-0.031px;"><span id="t112">Поисковая</span></div>
<div class="t" style="left:1183.50px;top:680.70px;font-size:13px;color:#5f6368;letter-spacing:-0.083px;"><span id="t113">сеть</span></div>
<div class="t" style="left:1297.70px;top:674.30px;font-size:13px;color:#5f6368;letter-spacing:-1.050px;"><span id="t114">80</span></div>
<div class="t" style="left:1347.90px;top:674.30px;font-size:13px;color:#5f6368;transform:scaleX(0.8776);transform-origin:0 0;"><span id="t115">5,00 %</span></div>
<div class="t" style="left:1429.30px;top:674.30px;font-size:13px;color:#5f6368;transform:scaleX(0.9184);transform-origin:0 0;"><span id="t116">0,40 $</span></div>
<div class="t" style="left:1492.70px;top:659.40px;font-size:13px;color:#1967d2;letter-spacing:-0.100px;width:71.30px;overflow:hidden;height:18.2px;"><span id="t117">Максимальное</span></div>
<div class="t" style="left:1492.70px;top:674.40px;font-size:13px;color:#1967d2;letter-spacing:0.061px;"><span id="t118">количество</span></div>
<div class="t" style="left:1492.70px;top:689.40px;font-size:13px;color:#1967d2;letter-spacing:0.330px;"><span id="t119">кликов</span></div>
<div class="t" style="left:1613.65px;top:674.30px;font-size:13px;color:#5f6368;"><span id="t120">4</span></div>
<div class="t" style="left:1657.80px;top:674.30px;font-size:13px;color:#5f6368;transform:scaleX(0.8653);transform-origin:0 0;"><span id="t121">0,00 %</span></div>
<div class="t" style="left:1741.80px;top:674.30px;font-size:13px;color:#5f6368;letter-spacing:-0.767px;"><span id="t122">0,00</span></div>
<div class="t" style="left:422.80px;top:731.00px;font-size:13px;color:#3c4043;letter-spacing:-0.209px;"><span id="t123">Итого (все кампании в текущем пр…</span></div>
<svg style="left:651.8px;top:728.9px;" width="14" height="14" viewBox="0 0 24 24"><path fill="#5f6368" d="M11 18h2v-2h-2v2zm1-16C6.48 2 2 6.48 2 12s4.48 10 10 10 10-4.48 10-10S17.52 2 12 2zm0 18c-4.41 0-8-3.59-8-8s3.59-8 8-8 8 3.59 8 8-3.59 8-8 8zm0-14c-2.21 0-4 1.79-4 4h2c0-1.1.9-2 2-2s2 .9 2 2c0 2-3 1.75-3 5h2c0-2.25 3-2.5 3-5 0-2.21-1.79-4-4-4z"/></svg>
<div class="a" style="left:1144.7px;top:736.8px;width:8.5px;height:1.2px;background:#3c4043"></div>
<div class="t" style="left:1280.50px;top:731.00px;font-size:13px;color:#3c4043;transform:scaleX(0.9401);transform-origin:0 0;"><span id="t124">2 300</span></div>
<div class="t" style="left:1347.90px;top:731.00px;font-size:13px;color:#3c4043;transform:scaleX(0.8776);transform-origin:0 0;"><span id="t125">5,39 %</span></div>
<div class="t" style="left:1422.20px;top:731.00px;font-size:13px;color:#3c4043;transform:scaleX(0.9296);transform-origin:0 0;"><span id="t126">67,37 $</span></div>
<div class="t" style="left:1600.60px;top:731.00px;font-size:13px;color:#3c4043;letter-spacing:-0.700px;"><span id="t127">124</span></div>
<div class="t" style="left:1657.80px;top:731.00px;font-size:13px;color:#3c4043;transform:scaleX(0.8653);transform-origin:0 0;"><span id="t128">0,00 %</span></div>
<div class="t" style="left:1741.80px;top:731.00px;font-size:13px;color:#3c4043;letter-spacing:-0.767px;"><span id="t129">0,00</span></div>
<div class="t" style="left:1280.50px;top:776.00px;font-size:13px;color:#3c4043;transform:scaleX(0.9401);transform-origin:0 0;"><span id="t130">2 300</span></div>
<div class="t" style="left:1347.90px;top:776.00px;font-size:13px;color:#3c4043;transform:scaleX(0.8776);transform-origin:0 0;"><span id="t131">5,39 %</span></div>
<div class="t" style="left:1422.20px;top:776.00px;font-size:13px;color:#3c4043;transform:scaleX(0.9296);transform-origin:0 0;"><span id="t132">67,37 $</span></div>
<div class="t" style="left:1600.60px;top:776.00px;font-size:13px;color:#3c4043;letter-spacing:-0.700px;"><span id="t133">124</span></div>
<div class="t" style="left:1657.80px;top:776.00px;font-size:13px;color:#3c4043;transform:scaleX(0.8653);transform-origin:0 0;"><span id="t134">0,00 %</span></div>
<div class="t" style="left:1741.80px;top:776.00px;font-size:13px;color:#3c4043;letter-spacing:-0.767px;"><span id="t135">0,00</span></div>
<svg style="left:389px;top:776px;" width="17" height="11" viewBox="0 0 17 11"><path d="M1.5 1.8L8.5 8.8 15.5 1.8" fill="none" stroke="#3c4043" stroke-width="2"/></svg>
<div class="t" style="left:422.80px;top:775.40px;font-size:13px;color:#3c4043;letter-spacing:-0.011px;"><span id="t136">Итого (аккаунт)</span></div>
<svg style="left:522.9px;top:773.7px;" width="14" height="14" viewBox="0 0 24 24"><path fill="#5f6368" d="M11 18h2v-2h-2v2zm1-16C6.48 2 2 6.48 2 12s4.48 10 10 10 10-4.48 10-10S17.52 2 12 2zm0 18c-4.41 0-8-3.59-8-8s3.59-8 8-8 8 3.59 8 8-3.59 8-8 8zm0-14c-2.21 0-4 1.79-4 4h2c0-1.1.9-2 2-2s2 .9 2 2c0 2-3 1.75-3 5h2c0-2.25 3-2.5 3-5 0-2.21-1.79-4-4-4z"/></svg>
<div class="t" style="left:740.40px;top:776.00px;font-size:13px;color:#3c4043;letter-spacing:-0.296px;"><span id="t137">17,00 $ в день</span></div>
<div class="a" style="left:1144.7px;top:781.8px;width:8.5px;height:1.2px;background:#3c4043"></div>
</body></html>
